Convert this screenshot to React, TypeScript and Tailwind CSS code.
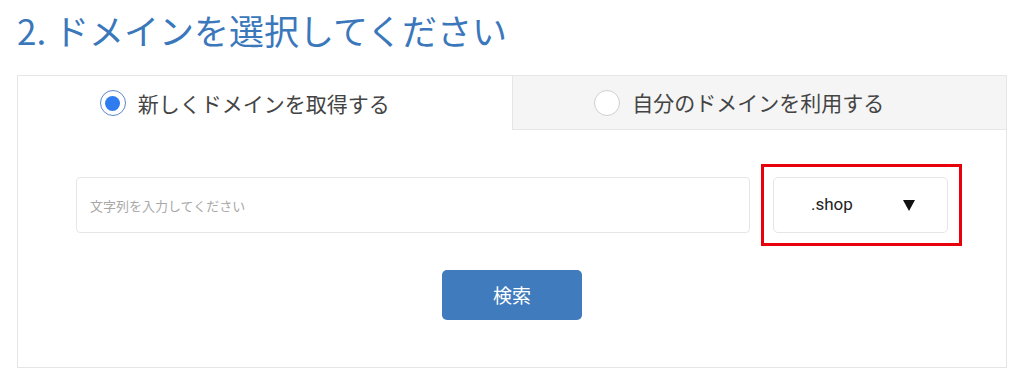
import { useState } from "react";

const jp = { fontFamily: '"Noto Sans CJK JP", "Noto Sans", sans-serif' };

function Radio({ checked }: { checked: boolean }) {
  return checked ? (
    <span className="flex h-[26px] w-[26px] items-center justify-center rounded-full border border-[#5b86cf] bg-white">
      <span className="h-[15px] w-[15px] rounded-full bg-[#2f7cf0]" />
    </span>
  ) : (
    <span className="h-[26px] w-[26px] rounded-full border border-[#cfcfcf] bg-white" />
  );
}

export default function App() {
  const [mode, setMode] = useState<"new" | "own">("new");
  const [query, setQuery] = useState("");

  return (
    <div className="min-h-screen w-full bg-white px-[17px] pt-[12px]" style={jp}>
      <h2 className="text-[35px] leading-[35px] font-normal text-[#3a77bb]">
        2. ドメインを選択してください
      </h2>

      <div className="mt-[28px] w-[990px] border border-[#e6e6e6] bg-white">
        {/* tabs */}
        <div className="flex h-[54px]">
          <button
            onClick={() => setMode("new")}
            className={`flex flex-1 items-center justify-center gap-[12px] pr-[40px] ${
              mode === "new" ? "bg-white" : "bg-[#f5f5f5] border-b border-[#e6e6e6]"
            }`}
          >
            <Radio checked={mode === "new"} />
            <span className="text-[21px] leading-none text-[#444]">新しくドメインを取得する</span>
          </button>
          <button
            onClick={() => setMode("own")}
            className={`flex flex-1 items-center justify-center gap-[12px] pr-[40px] border-l border-[#e6e6e6] ${
              mode === "own" ? "bg-white" : "bg-[#f5f5f5] border-b"
            }`}
          >
            <Radio checked={mode === "own"} />
            <span className="text-[21px] leading-none text-[#444]">自分のドメインを利用する</span>
          </button>
        </div>

        {/* body */}
        <div className="flex flex-col pt-[34px] pb-[47px]">
          <div className="flex items-center gap-[11px] pl-[58px] pr-[44px]">
            <input
              value={query}
              onChange={(e) => setQuery(e.target.value)}
              placeholder="文字列を入力してください"
              className="h-[56px] flex-1 rounded-[4px] border border-[#e6e6e6] bg-white px-[13px] text-[13px] text-[#333] outline-none placeholder:text-[#a8a8a8]"
              style={jp}
            />
            <div className="border-[3px] border-[#e8000b] pl-[9px] pr-[11px] py-[10px]">
              <div className="flex h-[56px] w-[175px] items-center justify-between rounded-[5px] border border-[#e6e6e6] bg-white pl-[37px] pr-[32px]">
                <span
                  className="text-[17px] text-[#222]"
                  style={{ fontFamily: 'Roboto, "Liberation Sans", sans-serif' }}
                >
                  .shop
                </span>
                <svg width="12" height="11" viewBox="0 0 12 11">
                  <path d="M0 0h12L6 11z" fill="#111" />
                </svg>
              </div>
            </div>
          </div>

          <div className="mt-[24px] flex justify-center">
            <button className="h-[50px] w-[140px] rounded-[5px] bg-[#3f7bbd] text-[19px] text-white">
              検索
            </button>
          </div>
        </div>
      </div>
    </div>
  );
}
